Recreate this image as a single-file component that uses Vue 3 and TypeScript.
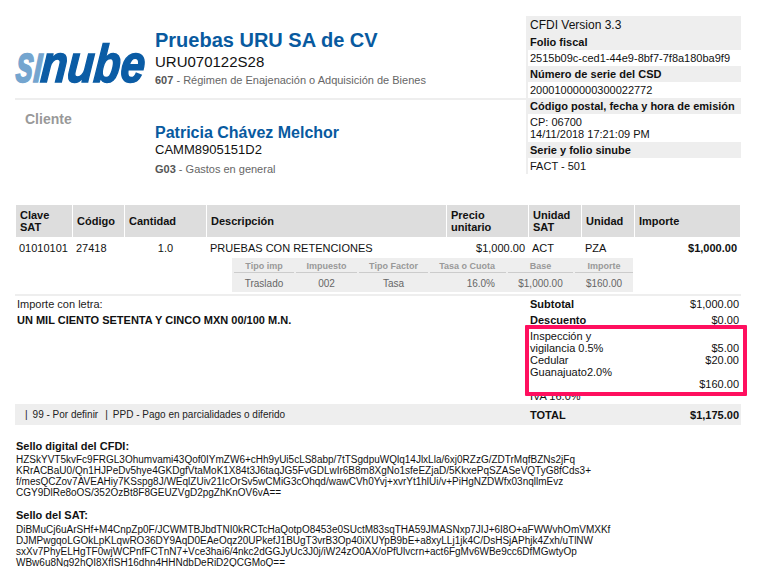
<script setup lang="ts">
interface Col { label: string }
const cols: Col[] = [
  { label: 'Clave SAT' }, { label: 'Código' }, { label: 'Cantidad' }, { label: 'Descripción' },
  { label: 'Precio unitario' }, { label: 'Unidad SAT' }, { label: 'Unidad' }, { label: 'Importe' },
]
const taxHead = ['Tipo imp', 'Impuesto', 'Tipo Factor', 'Tasa o Cuota', 'Base', 'Importe']
const sello1 = [
  'HZSkYVT5kvFc9FRGL3Ohumvami43Qof0IYmZW6+cHh9yUi5cLS8abp/7tTSgdpuWQlq14JlxLla/6xj0RZzG/ZDTrMqfBZNs2jFq',
  'KRrACBaU0/Qn1HJPeDv5hye4GKDgfVtaMoK1X84t3J6taqJG5FvGDLwIr6B8m8XgNo1sfeEZjaD/5KkxePqSZASeVQTyG8fCds3+',
  'f/mesQCZov7AVEAHiy7KSspg8J/WEqlZUiv21IcOrSv5wCMiG3cOhqd/wawCVh0Yvj+xvrYt1hlUi/v+PiHgNZDWfx03nqllmEvz',
  'CGY9DlRe8oOS/352OzBt8F8GEUZVgD2pgZhKnOV6vA==',
]
const sello2 = [
  'DiBMuCj6uArSHf+M4CnpZp0F/JCWMTBJbdTNI0kRCTcHaQotpO8453e0SUctM83sqTHA59JMASNxp7JIJ+6I8O+aFWWvhOmVMXKf',
  'DJMPwgqoLGOkLpKLqwRO36DY9AqD0EAeOqz20UPkefJ1BUgT3vrB3Op40iXUYpB9bE+a8xyLLj1jk4C/DsHSjAPhjk4Zxh/uTlNW',
  'sxXv7PhyELHgTF0wjWCPnfFCTnN7+Vce3hai6/4nkc2dGGJyUc3J0j/iW24zO0AX/oPfUlvcrn+act6FgMv6WBe9cc6DfMGwtyOp',
  'WBw6u8Ng92hQI8XfISH16dhn4HHNdbDeRiD2QCGMoQ==',
]
</script>

<template>
  <div class="page">
    <section class="top">
      <div class="left">
        <header class="issuer">
          <svg class="logo" width="140" height="50" viewBox="0 0 140 50" role="img" aria-label="sinube">
            <g transform="translate(3 0) skewX(-5)">
              <text x="0" y="38" class="logo-text logo-si" textLength="27" lengthAdjust="spacingAndGlyphs">sı</text>
              <text x="25" y="38" class="logo-text logo-nube" textLength="104" lengthAdjust="spacingAndGlyphs">nube</text>
            </g>
          </svg>
          <div class="issuer-info">
            <h1 class="issuer-name">Pruebas URU SA de CV</h1>
            <div class="issuer-rfc">URU070122S28</div>
            <div class="regime"><b>607</b> - Régimen de Enajenación o Adquisición de Bienes</div>
          </div>
        </header>
        <div class="client">
          <div class="client-label">Cliente</div>
          <div class="client-info">
            <h2 class="client-name">Patricia Chávez Melchor</h2>
            <div class="client-rfc">CAMM8905151D2</div>
            <div class="regime client-regime"><b>G03</b> - Gastos en general</div>
          </div>
        </div>
      </div>
      <aside class="fiscal">
        <div class="fiscal-version">CFDI Version 3.3</div>
        <div class="fiscal-title">Folio fiscal</div>
        <div class="fiscal-value">2515b09c-ced1-44e9-8bf7-7f8a180ba9f9</div>
        <div class="fiscal-title">Número de serie del CSD</div>
        <div class="fiscal-value">20001000000300022772</div>
        <div class="fiscal-title">Código postal, fecha y hora de emisión</div>
        <div class="fiscal-value fiscal-multi">CP: 06700<br />14/11/2018 17:21:09 PM</div>
        <div class="fiscal-title">Serie y folio sinube</div>
        <div class="fiscal-value">FACT - 501</div>
      </aside>
    </section>

    <section class="items">
      <div class="items-grid items-head">
        <div v-for="c in cols" :key="c.label" class="head-cell">{{ c.label }}</div>
      </div>
      <div class="items-grid items-row">
        <div class="cell c1">01010101</div>
        <div class="cell c2">27418</div>
        <div class="cell c3">1.0</div>
        <div class="cell c4">PRUEBAS CON RETENCIONES</div>
        <div class="cell c5">$1,000.00</div>
        <div class="cell c6">ACT</div>
        <div class="cell c7">PZA</div>
        <div class="cell c8">$1,000.00</div>
      </div>
      <div class="tax-table">
        <div
          v-for="(h, i) in taxHead"
          :key="h"
          class="tax-head"
          :class="{ 'tax-right': i === 3 }"
        >{{ h }}</div>
        <div class="tax-val">Traslado</div>
        <div class="tax-val">002</div>
        <div class="tax-val">Tasa</div>
        <div class="tax-val tax-right">16.0%</div>
        <div class="tax-val">$1,000.00</div>
        <div class="tax-val">$160.00</div>
      </div>
    </section>

    <section class="amounts">
      <div class="letters">
        <div class="letters-label">Importe con letra:</div>
        <div class="letters-value">UN MIL CIENTO SETENTA Y CINCO MXN 00/100 M.N.</div>
      </div>
      <div class="totals">
        <div class="total-line"><b>Subtotal</b><span>$1,000.00</span></div>
        <div class="total-line"><b>Descuento</b><span>$0.00</span></div>
        <div class="withheld">
          <div class="withheld-line"><span class="w-label">Inspección y<br />vigilancia 0.5%</span><span class="w-end">$5.00</span></div>
          <div class="withheld-line"><span class="w-label">Cedular<br />Guanajuato2.0%</span><span>$20.00</span></div>
          <div class="withheld-line"><span class="w-label"><br />IVA 16.0%</span><span>$160.00</span></div>
          <div class="highlight"></div>
        </div>
      </div>
    </section>

    <section class="band">
      <div class="band-text"><span class="sep">|</span>99 - Por definir<span class="sep sep-mid">|</span>PPD - Pago en parcialidades o diferido</div>
      <div class="band-total"><b>TOTAL</b><b class="band-amount">$1,175.00</b></div>
    </section>

    <section class="seal seal-first">
      <h3 class="seal-title">Sello digital del CFDI:</h3>
      <div v-for="l in sello1" :key="l" class="seal-line">{{ l }}</div>
    </section>
    <section class="seal seal-second">
      <h3 class="seal-title">Sello del SAT:</h3>
      <div v-for="l in sello2" :key="l" class="seal-line">{{ l }}</div>
    </section>
  </div>
</template>

<style>
html, body { background: #fff; overflow: hidden; }
</style>

<style scoped>
.page {
  width: 774px;
  height: 567px;
  overflow: hidden;
  box-sizing: border-box;
  padding: 16px 0 0 15px;
  font-family: "Liberation Sans", Arial, sans-serif;
  font-size: 11px;
  color: #111;
}
.top { display: flex; align-items: flex-start; }
.left { width: 511px; }
.issuer {
  display: flex;
  height: 82px;
  border-bottom: 2px solid #eee;
  box-sizing: content-box;
}
.logo { width: 140px; height: 50px; margin-top: 28px; flex: none; overflow: visible; }
.logo-text { font: italic bold 53px "Liberation Sans", Arial, sans-serif; stroke-width: 1.6px; }
.logo-si { fill: #74a5cf; stroke: #74a5cf; }
.logo-nube { fill: #0b5ca5; stroke: #0b5ca5; }
.issuer-info { padding-top: 13px; }
.issuer-name { margin: 0; font-size: 20px; line-height: 23px; font-weight: 700; color: #085a9f; }
.issuer-rfc { font-size: 15px; line-height: 19px; color: #111; }
.regime { font-size: 11px; line-height: 18px; color: #666; }
.regime b { color: #555; }
.client { display: flex; }
.client-label { width: 140px; padding: 10px 0 0 10px; box-sizing: border-box; font-size: 14px; line-height: 18px; font-weight: 700; color: #999; }
.client-info { padding-top: 23px; }
.client-name { margin: 0; font-size: 16px; line-height: 19px; font-weight: 700; color: #085a9f; }
.client-rfc { font-size: 13px; line-height: 16px; color: #111; }
.client-regime { margin-top: 1px; line-height: 20px; }

.fiscal { width: 215px; border-left: 2px solid #eee; box-sizing: border-box; color: #111; }
.fiscal > div { padding-left: 2px; }
.fiscal-version { background: #eee; font-size: 12px; line-height: 18px; }
.fiscal-title { background: #eee; font-size: 11px; line-height: 16px; font-weight: 700; white-space: nowrap; }
.fiscal-value { font-size: 11px; line-height: 16px; }
.fiscal-multi { line-height: 12px; padding-top: 2px; padding-bottom: 2px; }

.items { margin: 26px 0 0 1px; width: 725px; }
.items-grid {
  display: grid;
  grid-template-columns: 56px 51px 81px 239px 81px 52px 52px 105px;
  column-gap: 1px;
}
.head-cell {
  background: #ddd;
  height: 32px;
  display: flex;
  align-items: center;
  padding: 0 4px;
  font-size: 11px;
  line-height: 12px;
  font-weight: 700;
  color: #111;
  box-sizing: border-box;
}
.items-row { height: 21px; align-items: center; }
.cell { font-size: 11px; white-space: nowrap; color: #111; }
.c1 { padding-left: 3px; }
.c2 { padding-left: 3px; }
.c3 { text-align: center; }
.c4 { padding-left: 3px; }
.c5 { text-align: right; padding-right: 3px; }
.c6, .c7 { padding-left: 3px; }
.c8 { text-align: right; padding-right: 3px; font-weight: 700; }
.tax-table {
  margin-left: 216px;
  width: 401px;
  background: #eee;
  display: grid;
  grid-template-columns: 60px 61px 69px 76px 65px 58px;
  column-gap: 2px;
  padding: 0 2px;
  box-sizing: border-box;
  height: 34px;
  grid-template-rows: 15px 19px;
}
.tax-head {
  font-size: 9px;
  line-height: 14px;
  padding-top: 1px;
  box-sizing: border-box;
  font-weight: 700;
  color: #999;
  text-align: center;
  border-bottom: 1px solid #ccc;
  white-space: nowrap;
}
.tax-val { font-size: 10px; line-height: 20px; padding-top: 1px; color: #666; text-align: center; white-space: nowrap; }
.tax-head.tax-right, .tax-val.tax-right { text-align: right; padding-right: 11px; }

.amounts {
  display: flex;
  margin-top: 2px;
  width: 726px;
  border-top: 2px solid #eee;
  height: 108px;
}
.letters { width: 511px; padding: 0 0 0 2px; box-sizing: border-box; }
.letters-label { font-size: 11px; line-height: 16px; color: #222; }
.letters-value { font-size: 11px; line-height: 16px; font-weight: 700; color: #111; white-space: nowrap; }
.totals { width: 215px; padding: 0 2px 0 4px; box-sizing: border-box; }
.total-line { display: flex; justify-content: space-between; font-size: 11px; line-height: 16px; }
.withheld { position: relative; padding-top: 2px; }
.withheld-line { display: flex; justify-content: space-between; font-size: 11px; line-height: 12px; }
.w-end { align-self: flex-end; }
.highlight {
  position: absolute;
  left: -5px;
  right: -8px;
  top: -3px;
  height: 71px;
  border: 4px solid #ff0f5f;
  border-radius: 1px;
  box-sizing: border-box;
}

.band {
  width: 726px;
  height: 21px;
  background: #eee;
  display: flex;
  align-items: center;
}
.band-text { width: 511px; padding-left: 10px; box-sizing: border-box; font-size: 10px; color: #222; }
.sep { margin-right: 5px; }
.sep-mid { margin-left: 7px; }
.band-total { width: 215px; padding: 0 2px 0 4px; box-sizing: border-box; display: flex; justify-content: space-between; font-size: 11px; color: #111; }
.seal { padding-left: 1px; }
.seal-first { margin-top: 14px; }
.seal-second { margin-top: 10px; }
.seal-second .seal-title { margin-bottom: 2px; }
.seal-title { margin: 0 0 1px; font-size: 11px; line-height: 14px; font-weight: 700; color: #111; }
.seal-line { font-size: 10px; line-height: 11px; white-space: nowrap; color: #111; }
</style>
